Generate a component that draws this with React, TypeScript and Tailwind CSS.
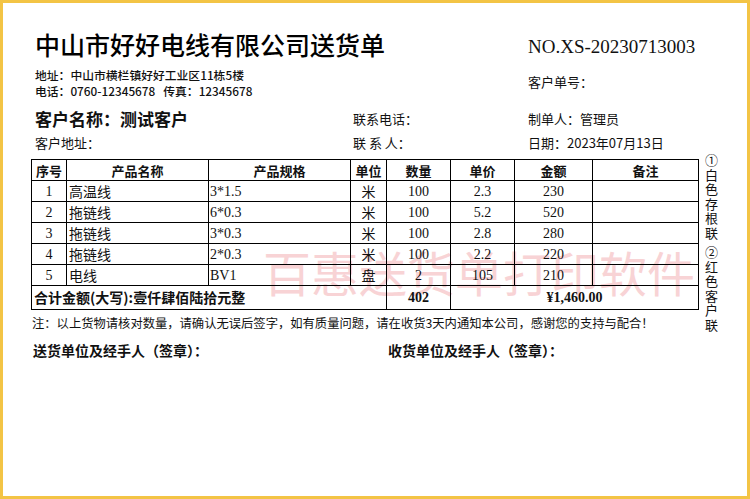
import React from "react";

const SANS = "font-['Noto_Sans_CJK_SC',sans-serif]";
const SERIF = "font-['Liberation_Serif','Noto_Sans_CJK_SC',serif]";

interface Row {
  no: number;
  name: string;
  spec: string;
  unit: string;
  qty: string;
  price: string;
  amount: string;
}

const ROWS: Row[] = [
  { no: 1, name: "高温线", spec: "3*1.5", unit: "米", qty: "100", price: "2.3", amount: "230" },
  { no: 2, name: "拖链线", spec: "6*0.3", unit: "米", qty: "100", price: "5.2", amount: "520" },
  { no: 3, name: "拖链线", spec: "3*0.3", unit: "米", qty: "100", price: "2.8", amount: "280" },
  { no: 4, name: "拖链线", spec: "2*0.3", unit: "米", qty: "100", price: "2.2", amount: "220" },
  { no: 5, name: "电线", spec: "BV1", unit: "盘", qty: "2", price: "105", amount: "210" },
];

const HEADERS = ["序号", "产品名称", "产品规格", "单位", "数量", "单价", "金额", "备注"];
const WIDTHS = ["w-[35px]", "w-[142px]", "w-[142px]", "w-[36px]", "w-[64px]", "w-[64px]", "w-[78px]", "w-[106px]"];

function VerticalLabel({ text }: { text: string }) {
  return (
    <div className="flex flex-col items-center">
      {Array.from(text).map((ch, i) => (
        <span key={i} className="block h-[14.5px] text-[13px] leading-[14.5px]">
          {ch}
        </span>
      ))}
    </div>
  );
}

export default function App() {
  const cell = "border border-black p-0";
  return (
    <div className={`relative h-[499px] w-[750px] overflow-hidden border-[3px] border-[#f3c445] bg-white text-[#111] ${SANS}`}>
      {/* watermark */}
      <div className="pointer-events-none absolute left-[260px] top-[244px] z-0 whitespace-nowrap text-[48px] leading-[48px] text-[#f8d3d5]">
        百惠送货单打印软件
      </div>

      <div className="relative z-10 pl-[28px] pt-[27px]">
        {/* header */}
        <div className="ml-[4px] grid grid-cols-[318px_175px_1fr]">
          <div className="col-span-2 text-[25px] font-medium leading-[28px] text-black">
            中山市好好电线有限公司送货单
          </div>
          <div className={`pt-[3px] text-[19px] leading-[28px] ${SERIF}`}>NO.XS-20230713003</div>

          <div className="col-span-2 mt-[6px] text-[11.8px] font-medium leading-[16px]">
            <div>地址：中山市横栏镇好好工业区11栋5楼</div>
            <div className="whitespace-pre">电话：0760-12345678   传真：12345678</div>
          </div>
          <div className="mt-[4px] flex items-center text-[13px]">客户单号：</div>

          <div className="mt-[8px] text-[17px] font-bold leading-[24px]">客户名称：测试客户</div>
          <div className="mt-[8px] text-[13px] leading-[24px]">联系电话：</div>
          <div className="mt-[8px] text-[13px] leading-[24px]">制单人：管理员</div>

          <div className="text-[13px] leading-[24px]">客户地址：</div>
          <div className="whitespace-pre text-[13px] leading-[24px]">联 系 人：</div>
          <div className="text-[13px] leading-[24px]">日期：2023年07月13日</div>
        </div>

        {/* table + side labels */}
        <div className="mt-[4px] flex items-start">
          <div className="w-[667px]">
            <table className="w-[667px] table-fixed border-collapse">
              <thead>
                <tr className="h-[21px]">
                  {HEADERS.map((h, i) => (
                    <th key={h} className={`${cell} ${WIDTHS[i]} text-center text-[13px] font-bold leading-[19px]`}>
                      {h}
                    </th>
                  ))}
                </tr>
              </thead>
              <tbody className={`text-[14px] leading-[19px] ${SERIF}`}>
                {ROWS.map((r) => (
                  <tr key={r.no} className="h-[21px]">
                    <td className={`${cell} text-center`}>{r.no}</td>
                    <td className={`${cell} pl-[2px] ${SANS}`}>{r.name}</td>
                    <td className={`${cell} pl-[1px]`}>{r.spec}</td>
                    <td className={`${cell} text-center ${SANS}`}>{r.unit}</td>
                    <td className={`${cell} text-center`}>{r.qty}</td>
                    <td className={`${cell} text-center`}>{r.price}</td>
                    <td className={`${cell} text-center`}>{r.amount}</td>
                    <td className={cell}></td>
                  </tr>
                ))}
                <tr className="h-[24px] font-bold">
                  <td colSpan={4} className={`${cell} pl-[2px] text-[14px] ${SANS}`}>
                    合计金额(大写):壹仟肆佰陆拾元整
                  </td>
                  <td className={`${cell} text-center`}>402</td>
                  <td colSpan={3} className={`${cell} text-center`}>¥1,460.00</td>
                </tr>
              </tbody>
            </table>

            <div className="mt-[5px] pl-[1px] text-[12.3px] leading-[16px]">
              注：以上货物请核对数量，请确认无误后签字，如有质量问题，请在收货3天内通知本公司，感谢您的支持与配合！
            </div>

            <div className="mt-[9px] flex text-[14px] font-bold leading-[20px]">
              <div className="w-[357px] pl-[2px]">送货单位及经手人（签章）：</div>
              <div>收货单位及经手人（签章）：</div>
            </div>
          </div>

          <div className="-mt-[6px] ml-[7px] flex flex-col items-center gap-[5px]">
            <VerticalLabel text="①白色存根联" />
            <VerticalLabel text="②红色客户联" />
          </div>
        </div>
      </div>
    </div>
  );
}
